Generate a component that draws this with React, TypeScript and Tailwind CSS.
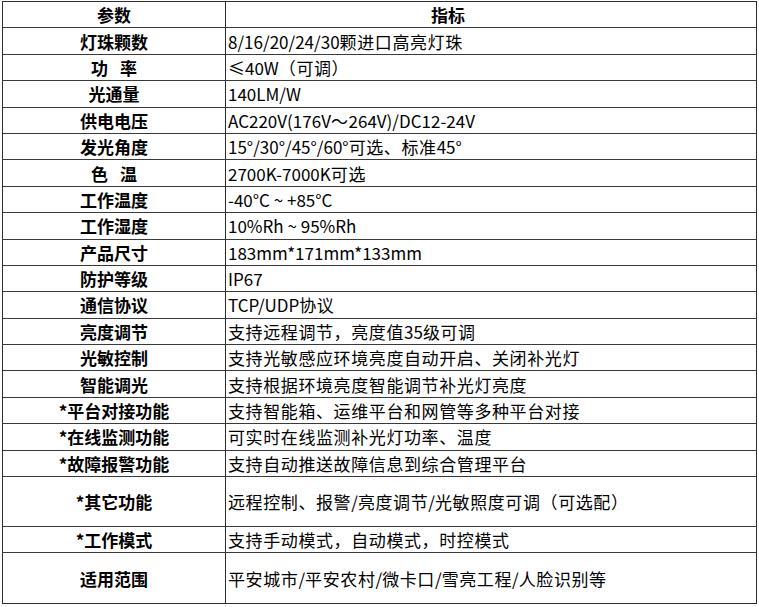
import React from "react";

type Row = { k: React.ReactNode; v: string; h?: string };

const rows: Row[] = [
  { k: "灯珠颗数", v: "8/16/20/24/30颗进口高亮灯珠" },
  {
    k: (
      <>
        功<span className="inline-block w-3" />率
      </>
    ),
    v: "≤40W（可调）",
  },
  { k: "光通量", v: "140LM/W" },
  { k: "供电电压", v: "AC220V(176V～264V)/DC12-24V" },
  { k: "发光角度", v: "15°/30°/45°/60°可选、标准45°" },
  {
    k: (
      <>
        色<span className="inline-block w-3" />温
      </>
    ),
    v: "2700K-7000K可选",
  },
  { k: "工作温度", v: "-40°C ~ +85°C" },
  { k: "工作湿度", v: "10%Rh ~ 95%Rh" },
  { k: "产品尺寸", v: "183mm*171mm*133mm" },
  { k: "防护等级", v: "IP67" },
  { k: "通信协议", v: "TCP/UDP协议" },
  { k: "亮度调节", v: "支持远程调节，亮度值35级可调" },
  { k: "光敏控制", v: "支持光敏感应环境亮度自动开启、关闭补光灯" },
  { k: "智能调光", v: "支持根据环境亮度智能调节补光灯亮度" },
  { k: "*平台对接功能", v: "支持智能箱、运维平台和网管等多种平台对接" },
  { k: "*在线监测功能", v: "可实时在线监测补光灯功率、温度" },
  { k: "*故障报警功能", v: "支持自动推送故障信息到综合管理平台" },
  { k: "*其它功能", v: "远程控制、报警/亮度调节/光敏照度可调（可选配）", h: "h-[50px]" },
  { k: "*工作模式", v: "支持手动模式，自动模式，时控模式" },
  { k: "适用范围", v: "平安城市/平安农村/微卡口/雪亮工程/人脸识别等", h: "h-[50px]" },
];

// CJK runs are a touch wider in the source than Noto's defaults; Latin is not
function Spaced({ text }: { text: string }) {
  const parts = text.split(/([\u3000-\u9fff\uff00-\uffef]+)/).filter(Boolean);
  return (
    <span>
      {parts.map((p, i) =>
        /[\u3000-\u9fff\uff00-\uffef]/.test(p) ? (
          <span key={i} className="tracking-[0.6px]">
            {p}
          </span>
        ) : (
          <span key={i}>{p}</span>
        ),
      )}
    </span>
  );
}

export default function App() {
  return (
    <div className="h-[607px] w-[759px] bg-white pl-[2px] pt-[1px] font-['Noto_Sans_CJK_SC',sans-serif] text-black">
      <div className="w-[755px] border border-[#2e2e2e]">
        <div className="flex h-[26.4px] border-b border-[#3a3a3a]">
          <div className="flex w-[223px] items-center justify-center border-r border-[#2e2e2e] text-[17px] font-bold leading-none">
            参数
          </div>
          <div className="flex flex-1 items-center justify-center pr-[86px] text-[17px] font-bold leading-none">
            指标
          </div>
        </div>
        {rows.map((r, i) => (
          <div
            key={i}
            className={`flex ${r.h ?? "h-[26.4px]"} ${
              i === rows.length - 1 ? "" : "border-b border-[#3a3a3a]"
            }`}
          >
            <div className="flex w-[223px] items-center justify-center border-r border-[#2e2e2e] text-[17px] font-bold leading-none">
              {r.k}
            </div>
            <div className="flex flex-1 items-center pl-[2px] text-[17px] leading-none">
              <Spaced text={r.v} />
            </div>
          </div>
        ))}
      </div>
    </div>
  );
}
